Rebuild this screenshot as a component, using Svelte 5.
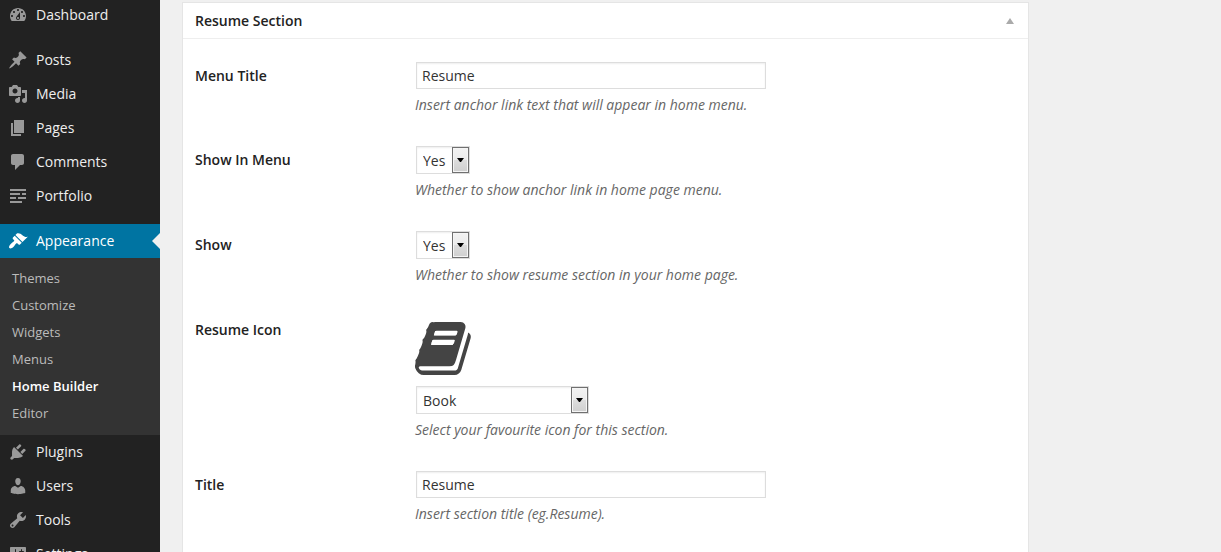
<script>
  const topMenu = [
    { label: 'Dashboard', icon: 'M3.76 16h12.48c1.1-1.37 1.76-3.11 1.76-5 0-4.42-3.58-8-8-8s-8 3.58-8 8c0 1.89.66 3.63 1.76 5zM10 4c.55 0 1 .45 1 1s-.45 1-1 1-1-.45-1-1 .45-1 1-1zM6 6c.55 0 1 .45 1 1s-.45 1-1 1-1-.45-1-1 .45-1 1-1zm8 0c.55 0 1 .45 1 1s-.45 1-1 1-1-.45-1-1 .45-1 1-1zm-5.37 5.55L12 7v6c0 1.1-.9 2-2 2s-2-.9-2-2c0-.57.24-1.08.63-1.45zM4 10c.55 0 1 .45 1 1s-.45 1-1 1-1-.45-1-1 .45-1 1-1zm12 0c.55 0 1 .45 1 1s-.45 1-1 1-1-.45-1-1 .45-1 1-1zm-5 3c0-.55-.45-1-1-1s-1 .45-1 1 .45 1 1 1 1-.45 1-1z' }
  ];
  const contentMenu = [
    { label: 'Posts', icon: 'M10.44 3.02l1.82-1.82 6.36 6.35-1.83 1.82c-1.05-.68-2.48-.57-3.41.36l-.75.75c-.92.93-1.04 2.35-.35 3.41l-1.83 1.82-2.41-2.41-2.8 2.79c-.42.42-3.38 2.71-3.8 2.29s1.86-3.39 2.28-3.81l2.79-2.79L4.1 9.36l1.83-1.82c1.05.69 2.48.57 3.4-.36l.75-.75c.93-.92 1.05-2.35.36-3.41z' },
    { label: 'Media', icon: 'M13 11V4c0-.55-.45-1-1-1h-1.67L9 1H5L3.67 3H2c-.55 0-1 .45-1 1v7c0 .55.45 1 1 1h10c.55 0 1-.45 1-1zM7 4.5c1.38 0 2.5 1.12 2.5 2.5S8.38 9.5 7 9.5 4.5 8.38 4.5 7 5.62 4.5 7 4.5zM14 6h5v10.5c0 1.38-1.12 2.5-2.5 2.5S14 17.88 14 16.5s1.12-2.5 2.5-2.5c.17 0 .34.02.5.05V9h-3V6zm-4 8.05V13h2v3.5c0 1.38-1.12 2.5-2.5 2.5S7 17.88 7 16.5 8.12 14 9.5 14c.17 0 .34.02.5.05z' },
    { label: 'Pages', icon: 'M6 15V2h10v13H6zm-1 1h8v2H3V5h2v11z' },
    { label: 'Comments', icon: 'M5 2h9c1.1 0 2 .9 2 2v7c0 1.1-.9 2-2 2h-2l-5 5v-5H5c-1.1 0-2-.9-2-2V4c0-1.1.9-2 2-2z' },
    { label: 'Portfolio', icon: 'M2 3h16v2H2zM2 7h10v2H2zM14 7h4v2h-4zM2 11h6v2H2zM10 11h8v2h-8zM2 15h12v2H2z' }
  ];
  const appearance = { label: 'Appearance', icon: 'M14.48 11.06L7.41 3.99l1.5-1.5c.5-.56 2.3-.47 3.51.32 1.21.8 1.43 1.28 2.91 2.1 1.18.64 2.45 1.26 4.45.85zm-.71.71L6.7 4.7 4.93 6.47c-.39.39-.39 1.02 0 1.41l1.06 1.06c.39.39.39 1.03 0 1.42-.6.6-1.43 1.11-2.21 1.69-.35.26-.7.53-1.01.84C1.43 14.23.4 16.08 1.4 17.07c.99 1 2.84-.03 4.18-1.36.31-.31.58-.66.85-1.02.57-.78 1.08-1.61 1.69-2.21.39-.39 1.02-.39 1.41 0l1.06 1.06c.39.39 1.02.39 1.41 0z' };
  const submenu = ['Themes', 'Customize', 'Widgets', 'Menus', 'Home Builder', 'Editor'];
  const adminMenu = [
    { label: 'Plugins', icon: 'M13.11 4.36L9.87 7.6 8 5.73l3.24-3.24c.35-.34 1.05-.2 1.56.32.52.51.66 1.21.31 1.55zm-8 1.77l.91-1.12 9.01 9.01-1.19.84c-.71.71-2.63 1.16-3.82 1.16H6.14L4.9 17.26c-.59.59-1.54.59-2.12 0-.59-.58-.59-1.53 0-2.12l1.24-1.24v-3.88c0-1.13.4-3.19 1.09-3.89zm7.26 3.97l3.24-3.24c.34-.35 1.04-.21 1.55.31.52.51.66 1.21.31 1.55l-3.24 3.25z' },
    { label: 'Users', icon: 'M10 9.25c-2.27 0-2.73-3.44-2.73-3.44C7 4.02 7.82 2 9.97 2c2.16 0 2.98 2.02 2.71 3.81 0 0-.41 3.44-2.68 3.44zm0 2.57L12.72 10c2.39 0 4.52 2.33 4.52 4.53v2.49s-3.65 1.13-7.24 1.13c-3.65 0-7.24-1.13-7.24-1.13v-2.49c0-2.25 1.94-4.48 4.47-4.48z' },
    { label: 'Tools', icon: 'M16.68 9.77c-1.34 1.34-3.3 1.67-4.95.99l-5.41 6.52c-.99.99-2.59.99-3.58 0s-.99-2.59 0-3.57l6.52-5.42c-.68-1.65-.35-3.61.99-4.95 1.28-1.28 3.12-1.62 4.72-1.06l-2.89 2.89 2.82 2.82 2.86-2.87c.53 1.58.18 3.39-1.08 4.65zM3.81 16.21c.4.39 1.04.39 1.43 0 .4-.4.4-1.04 0-1.43-.39-.4-1.03-.4-1.43 0-.39.39-.39 1.03 0 1.43z' },
    { label: 'Settings', icon: 'M18 16V4c0-.55-.45-1-1-1H3c-.55 0-1 .45-1 1v12c0 .55.45 1 1 1h14c.55 0 1-.45 1-1zM8 11h1c.55 0 1 .45 1 1s-.45 1-1 1H8v1.5c0 .28-.22.5-.5.5s-.5-.22-.5-.5V13H6c-.55 0-1-.45-1-1s.45-1 1-1h1V5.5c0-.28.22-.5.5-.5s.5.22.5.5V11zm5-2h-1c-.55 0-1-.45-1-1s.45-1 1-1h1V5.5c0-.28.22-.5.5-.5s.5.22.5.5V7h1c.55 0 1 .45 1 1s-.45 1-1 1h-1v5.5c0 .28-.22.5-.5.5s-.5-.22-.5-.5V9z' }
  ];
  const fields = [
    { id: 'menu-title', label: 'Menu Title', type: 'text', value: 'Resume', help: 'Insert anchor link text that will appear in home menu.' },
    { id: 'show-in-menu', label: 'Show In Menu', type: 'select', value: 'Yes', help: 'Whether to show anchor link in home page menu.' },
    { id: 'show', label: 'Show', type: 'select', value: 'Yes', help: 'Whether to show resume section in your home page.' },
    { id: 'resume-icon', label: 'Resume Icon', type: 'select', value: 'Book', wide: true, help: 'Select your favourite icon for this section.' },
    { id: 'title', label: 'Title', type: 'text', value: 'Resume', help: 'Insert section title (eg.Resume).' }
  ];
  let open = $state(true);
</script>

{#snippet menuItem(item, current)}
  <li>
    <a class="menu-link" class:current href="#{item.label.toLowerCase()}">
      <svg class="menu-icon" viewBox="0 0 20 20" aria-hidden="true"><path d={item.icon} /></svg>
      <span>{item.label}</span>
    </a>
    {#if current}
      <ul class="submenu">
        {#each submenu as name}
          <li><a class:active={name === 'Home Builder'} href="#{name.toLowerCase().replace(' ', '-')}">{name}</a></li>
        {/each}
      </ul>
    {/if}
  </li>
{/snippet}

<div class="page">
  <nav class="sidebar">
    <ul>{#each topMenu as item}{@render menuItem(item, false)}{/each}</ul>
    <ul>{#each contentMenu as item}{@render menuItem(item, false)}{/each}</ul>
    <ul>
      {@render menuItem(appearance, true)}
      {#each adminMenu as item}{@render menuItem(item, false)}{/each}
    </ul>
  </nav>

  <main>
    <section class="panel">
      <header>
        <h2>Resume Section</h2>
        <button type="button" aria-label="Toggle panel" aria-expanded={open} onclick={() => (open = !open)}>
          <svg viewBox="0 0 8 6" aria-hidden="true"><path d="M4 0L8 6H0z" /></svg>
        </button>
      </header>
      {#if open}
        <form>
          {#each fields as field}
            <div class="field">
              <label for={field.id}>{field.label}</label>
              <div class="control">
                {#if field.type === 'text'}
                  <input id={field.id} type="text" value={field.value} />
                {:else}
                  {#if field.wide}
                    <svg class="preview" viewBox="0 128 1670 1536" preserveAspectRatio="none" aria-hidden="true">
                      <path d="M1639 478q40 57 18 129l-275 906q-19 64-76.5 107.5t-122.5 43.5h-923q-77 0-148.5-53.5t-99.5-131.5q-24-67-2-127 0-4 3-27t4-37q1-8-3-21.5t-3-19.5q2-11 8-21t16.5-23.5 16.5-23.5q23-38 45-91.5t30-91.5q3-10 .5-30t-.5-28q3-11 17-28t17-23q21-36 42-92t25-90q1-9-2.5-32t.5-28q4-13 22-30.5t22-22.5q19-26 42.5-84.5t27.5-96.5q1-8-3-25.5t-2-26.5q2-8 9-18t18-23 17-21q8-12 16.5-30.5t15-35 16-36 19.5-32 26.5-23.5 36-11.5 47.5 5.5l-1 3q38-9 51-9h761q74 0 114 56t18 130l-274 906q-36 119-71.5 153.5t-128.5 34.5h-869q-27 0-38 15-11 16-1 43 24 70 144 70h923q29 0 56-15.5t35-41.5l300-987q7-22 5-57 38 15 59 43zm-1064 2q-4 13 2 22.5t20 9.5h608q13 0 25.5-9.5t16.5-22.5l21-64q4-13-2-22.5t-20-9.5h-608q-13 0-25.5 9.5t-16.5 22.5zm-83 256q-4 13 2 22.5t20 9.5h608q13 0 25.5-9.5t16.5-22.5l21-64q4-13-2-22.5t-20-9.5h-608q-13 0-25.5 9.5t-16.5 22.5z" />
                      <path class="cutout" d="M600 390h650l-38 130H562zM515 662h650l-38 130H477z" />
                    </svg>
                  {/if}
                  <span class="select" class:wide={field.wide}>
                    <select id={field.id}>
                      <option>{field.value}</option>
                    </select>
                    <span class="arrow"><svg viewBox="0 0 7 4" aria-hidden="true"><path d="M0 0h7L4 4H3z" /></svg></span>
                  </span>
                {/if}
                <p>{field.help}</p>
              </div>
            </div>
          {/each}
        </form>
      {/if}
    </section>
  </main>
</div>

<style>
  :global(body) {
    margin: 0;
    background: #f0f0f0;
  }
  .page {
    display: flex;
    height: 100vh;
    overflow: hidden;
    font: 14px/20px 'Open Sans', sans-serif;
    color: #222;
  }
  ul {
    list-style: none;
    margin: 0;
    padding: 0;
  }
  .sidebar {
    flex: none;
    display: flex;
    flex-direction: column;
    gap: 11px;
    width: 160px;
    margin-top: -2px;
    background: #222;
  }
  .menu-link {
    display: flex;
    align-items: center;
    gap: 8px;
    height: 34px;
    padding-left: 8px;
    color: #eee;
    text-decoration: none;
  }
  .menu-icon {
    width: 20px;
    height: 20px;
    fill: #999;
  }
  .current {
    position: relative;
    background: #0074a2;
    color: #fff;
  }
  .current .menu-icon {
    fill: #fff;
  }
  .current::after {
    content: '';
    position: absolute;
    right: 0;
    top: 9px;
    border: 8px solid transparent;
    border-left-width: 0;
    border-right-color: #f0f0f0;
  }
  .submenu {
    padding: 7px 0 8px;
    background: #333;
  }
  .submenu a {
    display: block;
    padding-left: 12px;
    font-size: 13px;
    line-height: 27px;
    color: #bbb;
    text-decoration: none;
  }
  .submenu .active {
    color: #fff;
    font-weight: 600;
  }
  main {
    flex: 1;
    min-width: 0;
    padding: 2px 192px 0 22px;
  }
  .panel {
    border: 1px solid #e5e5e5;
    background: #fff;
  }
  header {
    display: flex;
    align-items: center;
    justify-content: space-between;
    height: 35px;
    padding: 0 14px 0 12px;
    border-bottom: 1px solid #eee;
  }
  h2 {
    margin: 0;
    font-size: 14px;
    font-weight: 600;
  }
  button {
    display: flex;
    padding: 0;
    border: 0;
    background: none;
    cursor: pointer;
  }
  button svg {
    width: 8px;
    height: 6px;
    fill: #aaa;
  }
  form {
    display: flex;
    flex-direction: column;
    gap: 31px;
    padding: 23px 12px 31px;
  }
  .field {
    display: grid;
    grid-template-columns: 220px minmax(0, 1fr);
  }
  label {
    font-weight: 600;
    line-height: 28px;
  }
  .control {
    display: flex;
    flex-direction: column;
    align-items: flex-start;
  }
  input,
  select {
    box-sizing: border-box;
    margin: 0;
    border: 1px solid #ddd;
    border-radius: 0;
    background: #fff;
    box-shadow: inset 0 1px 2px rgba(0, 0, 0, 0.07);
    color: #333;
    font: inherit;
  }
  input {
    width: 350px;
    max-width: 100%;
    height: 27px;
    margin-left: 1px;
    padding: 0 5px;
  }
  .select {
    position: relative;
    width: 54px;
    height: 28px;
    margin-left: 1px;
  }
  .select.wide {
    width: 173px;
  }
  select {
    appearance: none;
    width: 100%;
    height: 100%;
    padding: 2px 18px 0 6px;
  }
  .arrow {
    position: absolute;
    top: 1px;
    right: 1px;
    bottom: 1px;
    box-sizing: border-box;
    display: grid;
    place-items: center;
    width: 17px;
    border: 1px solid #707070;
    background: linear-gradient(#f2f2f2, #ebebeb 50%, #ddd 50%, #cfcfcf);
    box-shadow: inset 0 0 0 1px #f5f5f5;
    pointer-events: none;
  }
  .arrow svg {
    width: 7px;
    height: 4px;
    fill: #000;
  }
  .preview {
    width: 56px;
    height: 53px;
    margin: 6px 0 11px;
    fill: #444;
  }
  .cutout {
    fill: #fff;
  }
  p {
    margin: 6px 0 0;
    color: #666;
    font-style: italic;
  }
</style>
